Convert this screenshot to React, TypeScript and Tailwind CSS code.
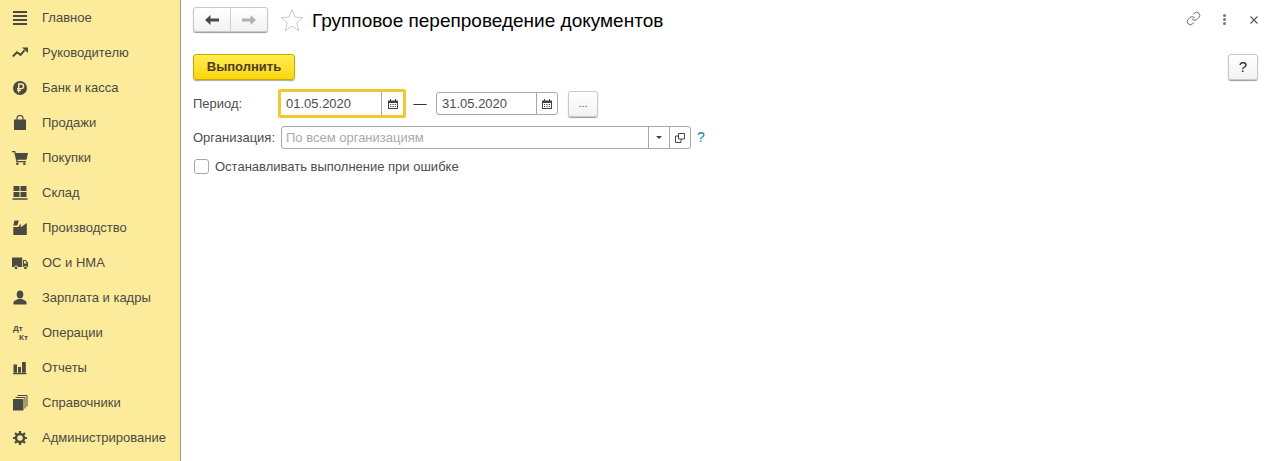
import React from 'react';
import { Link } from 'lucide-react';

const Ic: React.FC<{ children: React.ReactNode }> = ({ children }) => (
  <svg width="16" height="16" viewBox="0 0 16 16" fill="#4a4a40">
    {children}
  </svg>
);

const navItems: { label: string; icon: React.ReactNode }[] = [
  {
    label: 'Главное',
    icon: (
      <Ic>
        <path d="M1 1h14v2H1zM1 5h14v2H1zM1 9h14v2H1zM1 13h14v2H1z" />
      </Ic>
    ),
  },
  {
    label: 'Руководителю',
    icon: (
      <Ic>
        <path d="M0.800 11.500 5 7.300l3.500 2.500 4-4.500" fill="none" stroke="#4a4a40" strokeWidth="2" />
        <path d="M10 2.500h6v5.500z" />
      </Ic>
    ),
  },
  {
    label: 'Банк и касса',
    icon: (
      <svg width="16" height="16" viewBox="0 0 16 16">
        <circle cx="8" cy="8" r="7" fill="#4a4a40" />
        <path d="M6.700 12.500V4h2.600a2.200 2.200 0 0 1 0 4.600H5M5 10.400h4" fill="none" stroke="#fdeb9c" strokeWidth="1.400" />
      </svg>
    ),
  },
  {
    label: 'Продажи',
    icon: (
      <Ic>
        <path d="M2 4.500h12V15H2z" />
        <path d="M5 7V3a3 2.500 0 0 1 6 0v4" fill="none" stroke="#4a4a40" strokeWidth="1.200" />
      </Ic>
    ),
  },
  {
    label: 'Покупки',
    icon: (
      <Ic>
        <path d="M0 1h3.200l.6 2H16l-1.500 6.800H5.200l.4 1.300h8.400v1.200H4.500L2.300 2.300H0z" />
        <circle cx="5.300" cy="13.700" r="1.300" />
        <circle cx="12.300" cy="13.700" r="1.300" />
      </Ic>
    ),
  },
  {
    label: 'Склад',
    icon: (
      <Ic>
        <path d="M1.500 1h6v5h-6zM8.500 1h6v5h-6zM1.500 7h6v5h-6zM8.500 7h6v5h-6zM.5 13.300h15v1.400H.5z" />
      </Ic>
    ),
  },
  {
    label: 'Производство',
    icon: (
      <Ic>
        <path d="M2.500.5h4.300L5.300 5.500H1.300zM1.300 15V7h5l2.500-3.500v3.700l6-4.200V15z" />
      </Ic>
    ),
  },
  {
    label: 'ОС и НМА',
    icon: (
      <Ic>
        <path d="M0 2.500h10.200V12H6a2 2 0 0 0-3.800 0H0zM11 5h2.800L16 7.800V12h-.8a2 2 0 0 0-3.600 0H11zM12 6v2.500h2.800L13.400 6z" fillRule="evenodd" />
        <circle cx="4" cy="12.800" r="1.400" />
        <circle cx="13.400" cy="12.800" r="1.400" />
      </Ic>
    ),
  },
  {
    label: 'Зарплата и кадры',
    icon: (
      <Ic>
        <ellipse cx="8" cy="4.500" rx="3.300" ry="4" />
        <path d="M1.500 14.500V12.300C1.500 10.800 4.500 10 6 9h4c1.500 1 4.500 1.800 4.500 3.300v2.200z" />
      </Ic>
    ),
  },
  {
    label: 'Операции',
    icon: (
      <span className="relative block h-4 w-4 text-[8px] font-bold leading-none text-[#4a4a40]">
        <span className="absolute left-[1px] top-0">Дт</span>
        <span className="absolute left-[7px] top-[9px]">Кт</span>
      </span>
    ),
  },
  {
    label: 'Отчеты',
    icon: (
      <Ic>
        <path d="M1.500 4.500h3.500V12.800H1.500zM6 7h3v5.800H6zM10 2h3.800v10.800H10zM1 13h13.500v1.300H1z" />
      </Ic>
    ),
  },
  {
    label: 'Справочники',
    icon: (
      <Ic>
        <path d="M1 4h10.500v11.500H1z" />
        <path d="M3.500 2.500h9.500V13.500M5.500 .5h9.500V11.500" fill="none" stroke="#4a4a40" strokeWidth="1" />
      </Ic>
    ),
  },
  {
    label: 'Администрирование',
    icon: (
      <svg width="16" height="16" viewBox="0 0 16 16">
        <circle cx="8" cy="8" r="4" fill="none" stroke="#4a4a40" strokeWidth="2.400" />
        <path
          d="M8 1v2.500M8 12.500V15M1 8h2.500M12.500 8H15M3 3l1.800 1.800M11.200 11.200 13 13M13 3l-1.800 1.800M4.800 11.200 3 13"
          stroke="#4a4a40"
          strokeWidth="2.200"
        />
      </svg>
    ),
  },
];

const CalendarIcon = () => (
  <svg width="10" height="10" viewBox="0 0 10 10" fill="#444">
    <path d="M0 1.500h2V0h1v1.500h4V0h1v1.500h2V10H0zM1 4v5h8V4z" fillRule="evenodd" />
    <path d="M2 5h1.200v1H2zM4.400 5h1.200v1H4.400zM6.800 5H8v1H6.800zM2 7h1.200v1H2zM4.400 7h1.200v1H4.400zM6.800 7H8v1H6.800z" />
  </svg>
);

const DateField: React.FC<{ value: string; width: string }> = ({ value, width }) => (
  <div className={`flex h-[23px] items-center rounded-[3px] border border-[#a8a8a8] bg-white ${width}`}>
    <span className="flex-1 pl-[5px] text-[13px] text-[#4d4d4d]">{value}</span>
    <span className="flex h-full w-[21px] items-center justify-center border-l border-[#a8a8a8]">
      <CalendarIcon />
    </span>
  </div>
);

export default function App() {
  return (
    <div className="flex h-[461px] w-[1277px] overflow-hidden bg-white text-[13px] text-[#4d4d4d] font-['Liberation_Sans',Arial,sans-serif]">
      {/* Sidebar */}
      <nav className="w-[181px] shrink-0 border-r border-[#9d9d80] bg-[#fdeb9c]">
        {navItems.map((item) => (
          <div key={item.label} className="flex h-[35px] items-center text-[#4a4a40]">
            <span className="ml-[12px] mr-[14px] flex w-4 justify-center">{item.icon}</span>
            <span>{item.label}</span>
          </div>
        ))}
      </nav>

      {/* Content */}
      <main className="flex-1 pl-[12px] pr-[19px]">
        {/* Title bar */}
        <div className="flex h-[47px] items-start pt-[7px]">
          <div className="flex h-[25px] w-[75px] rounded-[3px] border border-[#c8c8c8] bg-gradient-to-b from-white to-[#f2f2f2] shadow-[0_1px_1px_#999]">
            <span className="flex flex-1 items-center justify-center border-r border-[#d0d0d0]">
              <svg width="14" height="10" viewBox="0 0 14 10" fill="#4a4a4a">
                <path d="M0 5l5.500-5v3.500H14v3H5.500V10z" />
              </svg>
            </span>
            <span className="flex flex-1 items-center justify-center">
              <svg width="14" height="10" viewBox="0 0 14 10" fill="#b0b0b0">
                <path d="M14 5L8.500 0v3.500H0v3h8.500V10z" />
              </svg>
            </span>
          </div>
          <svg className="ml-[12px] mt-[1px]" width="24" height="23" viewBox="0 0 24 23" fill="none" stroke="#c9c9c9">
            <path d="M12 1.500l3 7.600 8 .5-6.200 5.100 2 7.800L12 18.200l-6.800 4.300 2-7.800L1 9.600l8-.5z" />
          </svg>
          <h1 className="ml-[8px] text-[19px] leading-[28px] text-black">Групповое перепроведение документов</h1>
          <div className="ml-auto flex items-center pt-[4px] text-[#555]">
            <Link size={15} strokeWidth={1.400} className="mr-[22px]" />
            <span className="mr-[24px] mt-[1px] flex w-[3px] flex-col gap-[1px]">
              <span className="h-[3px] w-[3px] rounded-full bg-[#777]" />
              <span className="h-[3px] w-[3px] rounded-full bg-[#777]" />
              <span className="h-[3px] w-[3px] rounded-full bg-[#777]" />
            </span>
            <svg className="mt-[2px]" width="8" height="8" viewBox="0 0 8 8" fill="none" stroke="#555" strokeWidth="1.100">
              <path d="M.5.5l7 7M7.500.5l-7 7" />
            </svg>
          </div>
        </div>

        {/* Command bar */}
        <div className="flex items-start justify-between pt-[7px]">
          <button className="h-[26px] w-[102px] rounded-[3px] border border-[#c9a800] bg-gradient-to-b from-[#ffec4d] to-[#fbd700] text-[13px] font-bold text-[#4a4020] shadow-[0_1px_1px_#aaa]">
            Выполнить
          </button>
          <button className="h-[26px] w-[30px] rounded-[3px] border border-[#c8c8c8] bg-gradient-to-b from-white to-[#f2f2f2] text-[15px] text-[#222] shadow-[0_1px_1px_#999]">
            ?
          </button>
        </div>

        {/* Period */}
        <div className="mt-[9px] flex h-[29px] items-center">
          <span className="w-[85px]">Период:</span>
          <div className="flex h-[29px] w-[128px] items-center rounded-[2px] border-[3px] border-[#f2c832] bg-white">
            <span className="flex-1 pl-[5px] text-[#4d4d4d]">01.05.2020</span>
            <span className="flex h-[23px] w-[22px] items-center justify-center border-l border-[#a8a8a8]">
              <CalendarIcon />
            </span>
          </div>
          <span className="ml-[6px] mr-[8px] w-[16px] text-center text-[#333]">—</span>
          <DateField value="31.05.2020" width="w-[122px]" />
          <button className="ml-[10px] h-[26px] w-[30px] rounded-[3px] border border-[#c8c8c8] bg-gradient-to-b from-white to-[#f2f2f2] text-[11px] text-[#555] shadow-[0_1px_1px_#999]">
            ...
          </button>
        </div>

        {/* Organization */}
        <div className="mt-[8px] flex h-[23px] items-center">
          <span className="w-[88px]">Организация:</span>
          <div className="flex h-[23px] w-[410px] items-center rounded-[3px] border border-[#a8a8a8] bg-white">
            <span className="flex-1 pl-[4px] text-[#aaa]">По всем организациям</span>
            <span className="flex h-full w-[21px] items-center justify-center border-l border-[#a8a8a8]">
              <span className="h-0 w-0 border-x-[3px] border-t-[3px] border-x-transparent border-t-[#444]" />
            </span>
            <span className="flex h-full w-[21px] items-center justify-center border-l border-[#a8a8a8]">
              <svg width="10" height="10" viewBox="0 0 10 10" fill="none" stroke="#444">
                <path d="M3.500.5h6v5.500h-6zM3.500 3H.5v6.500H6V6" />
              </svg>
            </span>
          </div>
          <span className="ml-[6px] text-[14px] text-[#1b7da8]">?</span>
        </div>

        {/* Checkbox */}
        <label className="mt-[10px] flex h-[15px] items-center pl-[1px]">
          <span className="h-[15px] w-[15px] rounded-[3px] border border-[#a8a8a8] bg-white" />
          <span className="ml-[6px]">Останавливать выполнение при ошибке</span>
        </label>
      </main>
    </div>
  );
}
